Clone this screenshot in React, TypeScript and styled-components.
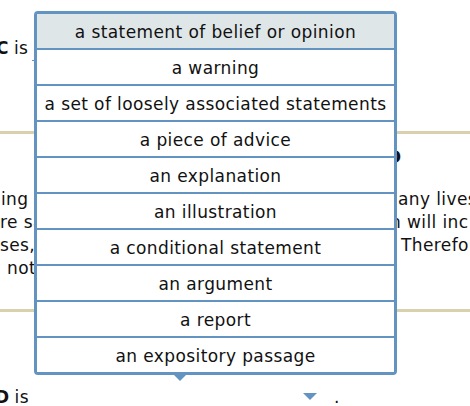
import React from "react";
import styled, { createGlobalStyle } from "styled-components";

const Global = createGlobalStyle`
  html, body { margin: 0; padding: 0; background: #fff; }
  body { font-family: "DejaVu Sans", Verdana, sans-serif; }
`;

const Page = styled.div`
  position: relative;
  width: 470px;
  height: 406px;
  overflow: hidden;
  background: #fff;
  color: #111;
  font-family: "DejaVu Sans", Verdana, sans-serif;
  font-size: 17px;
  letter-spacing: 0.4px;
`;

const TopSection = styled.div`
  height: 131px;
  padding-top: 37px;
  box-sizing: border-box;
`;

const QuestionLine = styled.div`
  display: flex;
  align-items: flex-end;
  line-height: 22px;
  white-space: nowrap;
`;

const Letter = styled.b<{ $shift: number }>`
  font-weight: bold;
  margin-left: ${(p) => p.$shift}px;
  margin-right: 5px;
`;

const SelectLine = styled.span`
  display: inline-block;
  width: 120px;
  height: 10px;
  margin-left: 4px;
  margin-bottom: -2px;
  border-bottom: 1px solid #6394c1;
`;

const Divider = styled.div`
  height: 3px;
  background: #d9d0ae;
`;

const Middle = styled.div`
  height: 175px;
  display: grid;
  grid-template-columns: 381px 1fr;
  overflow: hidden;
`;

const Column = styled.div`
  padding-top: 12px;
  white-space: nowrap;
  overflow: hidden;
  line-height: 23px;
`;

const Heading = styled.div<{ $indent?: number }>`
  font-weight: bold;
  height: 23px;
  margin-bottom: 19px;
  padding-left: ${(p) => p.$indent ?? 0}px;
`;

const Line = styled.div<{ $indent?: number }>`
  padding-left: ${(p) => p.$indent ?? 0}px;
`;

const Bottom = styled.div`
  padding-top: 74px;
  display: flex;
  align-items: flex-end;
  line-height: 22px;
  white-space: nowrap;
`;

const SelectArrow = styled.span`
  display: inline-block;
  margin-left: 274px;
  margin-bottom: 8px;
  width: 0;
  height: 0;
  border-left: 7px solid transparent;
  border-right: 7px solid transparent;
  border-top: 7px solid #6394c1;
`;

const Period = styled.span`
  margin-left: 17px;
`;

const Menu = styled.ul`
  position: absolute;
  left: 34px;
  top: 11px;
  width: 363px;
  margin: 0;
  padding: 0;
  list-style: none;
  box-sizing: border-box;
  border: 3px solid #6394c1;
  border-radius: 4px;
  background: #fff;

  &::after {
    content: "";
    position: absolute;
    left: 136px;
    top: calc(100% + 2px);
    border-left: 7px solid transparent;
    border-right: 7px solid transparent;
    border-top: 7px solid #6394c1;
  }
`;

const Option = styled.li<{ $active?: boolean }>`
  height: 34px;
  display: flex;
  align-items: center;
  justify-content: center;
  padding-top: 1px;
  box-sizing: border-box;
  color: #111;
  background: ${(p) => (p.$active ? "#dfe6e8" : "#fff")};
  border-bottom: 2px solid #6394c1;
  white-space: nowrap;
  height: 36px;

  &:last-child {
    border-bottom: none;
    height: 34px;
  }
`;

const options = [
  "a statement of belief or opinion",
  "a warning",
  "a set of loosely associated statements",
  "a piece of advice",
  "an explanation",
  "an illustration",
  "a conditional statement",
  "an argument",
  "a report",
  "an expository passage",
];

export default function App() {
  return (
    <Page>
      <Global />
      <TopSection>
        <QuestionLine>
          <Letter $shift={-4}>C</Letter>
          <span>is</span>
          <SelectLine />
        </QuestionLine>
      </TopSection>
      <Divider />
      <Middle>
        <Column>
          <Heading>&nbsp;</Heading>
          <Line $indent={1}>ing</Line>
          <Line>re sa</Line>
          <Line>ses,</Line>
          <Line $indent={7}>not</Line>
        </Column>
        <Column>
          <Heading $indent={6}>D</Heading>
          <Line>many lives</Line>
          <Line $indent={9}>n will inc</Line>
          <Line $indent={20}>Therefor</Line>
        </Column>
      </Middle>
      <Divider />
      <Bottom>
        <Letter $shift={-5}>D</Letter>
        <span>is</span>
        <SelectArrow />
        <Period>.</Period>
      </Bottom>
      <Menu>
        {options.map((o, i) => (
          <Option key={o} $active={i === 0}>
            {o}
          </Option>
        ))}
      </Menu>
    </Page>
  );
}
